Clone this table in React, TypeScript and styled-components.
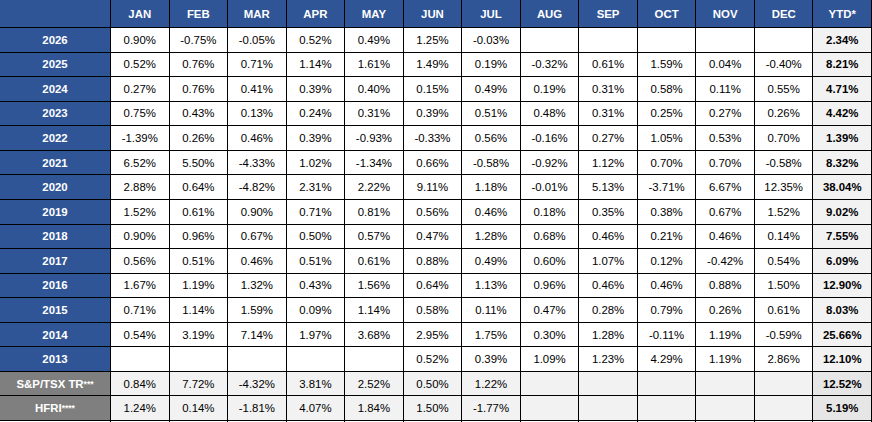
import React from "react"
import styled, { createGlobalStyle } from "styled-components"

const GlobalStyle = createGlobalStyle`
  html, body {
    margin: 0;
    padding: 0;
    background: #ffffff;
  }
  body {
    font-family: "Liberation Sans", Arial, sans-serif;
    overflow: hidden;
  }
`

const MONTHS = ["JAN", "FEB", "MAR", "APR", "MAY", "JUN", "JUL", "AUG", "SEP", "OCT", "NOV", "DEC"]

type Row = { year: string; values: string[]; ytd: string }

const YEARS: Row[] = [
  { year: "2026", values: ["0.90", "-0.75", "-0.05", "0.52", "0.49", "1.25", "-0.03", "", "", "", "", ""], ytd: "2.34" },
  { year: "2025", values: ["0.52", "0.76", "0.71", "1.14", "1.61", "1.49", "0.19", "-0.32", "0.61", "1.59", "0.04", "-0.40"], ytd: "8.21" },
  { year: "2024", values: ["0.27", "0.76", "0.41", "0.39", "0.40", "0.15", "0.49", "0.19", "0.31", "0.58", "0.11", "0.55"], ytd: "4.71" },
  { year: "2023", values: ["0.75", "0.43", "0.13", "0.24", "0.31", "0.39", "0.51", "0.48", "0.31", "0.25", "0.27", "0.26"], ytd: "4.42" },
  { year: "2022", values: ["-1.39", "0.26", "0.46", "0.39", "-0.93", "-0.33", "0.56", "-0.16", "0.27", "1.05", "0.53", "0.70"], ytd: "1.39" },
  { year: "2021", values: ["6.52", "5.50", "-4.33", "1.02", "-1.34", "0.66", "-0.58", "-0.92", "1.12", "0.70", "0.70", "-0.58"], ytd: "8.32" },
  { year: "2020", values: ["2.88", "0.64", "-4.82", "2.31", "2.22", "9.11", "1.18", "-0.01", "5.13", "-3.71", "6.67", "12.35"], ytd: "38.04" },
  { year: "2019", values: ["1.52", "0.61", "0.90", "0.71", "0.81", "0.56", "0.46", "0.18", "0.35", "0.38", "0.67", "1.52"], ytd: "9.02" },
  { year: "2018", values: ["0.90", "0.96", "0.67", "0.50", "0.57", "0.47", "1.28", "0.68", "0.46", "0.21", "0.46", "0.14"], ytd: "7.55" },
  { year: "2017", values: ["0.56", "0.51", "0.46", "0.51", "0.61", "0.88", "0.49", "0.60", "1.07", "0.12", "-0.42", "0.54"], ytd: "6.09" },
  { year: "2016", values: ["1.67", "1.19", "1.32", "0.43", "1.56", "0.64", "1.13", "0.96", "0.46", "0.46", "0.88", "1.50"], ytd: "12.90" },
  { year: "2015", values: ["0.71", "1.14", "1.59", "0.09", "1.14", "0.58", "0.11", "0.47", "0.28", "0.79", "0.26", "0.61"], ytd: "8.03" },
  { year: "2014", values: ["0.54", "3.19", "7.14", "1.97", "3.68", "2.95", "1.75", "0.30", "1.28", "-0.11", "1.19", "-0.59"], ytd: "25.66" },
  { year: "2013", values: ["", "", "", "", "", "0.52", "0.39", "1.09", "1.23", "4.29", "1.19", "2.86"], ytd: "12.10" },
]

type Bench = { name: string; stars: string; values: string[]; ytd: string }

const BENCHMARKS: Bench[] = [
  { name: "S&P/TSX TR", stars: "***", values: ["0.84", "7.72", "-4.32", "3.81", "2.52", "0.50", "1.22", "", "", "", "", ""], ytd: "12.52" },
  { name: "HFRI", stars: "****", values: ["1.24", "0.14", "-1.81", "4.07", "1.84", "1.50", "-1.77", "", "", "", "", ""], ytd: "5.19" },
]

const pct = (v: string) => (v ? `${v}%` : "")

const Table = styled.div`
  display: grid;
  width: 872px;
  grid-template-columns: 111px repeat(13, 1fr);
  grid-template-rows: 28px repeat(16, 24.5625px) 2px;
  font-size: 11.4px;
  color: #000000;
`

type Tone = "head" | "year" | "bench" | "plain" | "shade" | "ytd" | "benchYtd"

const Cell = styled.div<{ $tone: Tone }>`
  display: flex;
  align-items: center;
  justify-content: center;
  box-sizing: border-box;
  border-right: 1px solid #000000;
  border-bottom: 1px solid #000000;
  white-space: nowrap;
  font-weight: ${({ $tone }) => ($tone === "plain" || $tone === "shade" ? "normal" : "bold")};
  color: ${({ $tone }) =>
    $tone === "head" || $tone === "year" || $tone === "bench" ? "#ffffff" : "#000000"};
  background: ${({ $tone }) => {
    switch ($tone) {
      case "head":
      case "year":
        return "#2f5597"
      case "bench":
        return "#7f7f7f"
      case "shade":
      case "ytd":
        return "#f2f2f2"
      case "benchYtd":
        return "#e7e6e6"
      default:
        return "#ffffff"
    }
  }};
`

const TailCell = styled.div`
  border-right: 1px solid #000000;
  background: #ffffff;
`

const Stars = styled.sup`
  font-size: 8.5px;
  line-height: 0;
  vertical-align: 3px;
`

export default function App() {
  return (
    <>
      <GlobalStyle />
      <Table>
        <Cell $tone="head" />
        {MONTHS.map((m) => (
          <Cell key={m} $tone="head">
            {m}
          </Cell>
        ))}
        <Cell $tone="head">YTD*</Cell>

        {YEARS.map((r) => (
          <React.Fragment key={r.year}>
            <Cell $tone="year">{r.year}</Cell>
            {r.values.map((v, i) => (
              <Cell key={i} $tone="plain">
                {pct(v)}
              </Cell>
            ))}
            <Cell $tone="ytd">{pct(r.ytd)}</Cell>
          </React.Fragment>
        ))}

        {BENCHMARKS.map((b) => (
          <React.Fragment key={b.name}>
            <Cell $tone="bench">
              {b.name}
              <Stars>{b.stars}</Stars>
            </Cell>
            {b.values.map((v, i) => (
              <Cell key={i} $tone="shade">
                {pct(v)}
              </Cell>
            ))}
            <Cell $tone="benchYtd">{pct(b.ytd)}</Cell>
          </React.Fragment>
        ))}

        {Array.from({ length: 14 }).map((_, i) => (
          <TailCell key={`tail-${i}`} />
        ))}
      </Table>
    </>
  )
}
